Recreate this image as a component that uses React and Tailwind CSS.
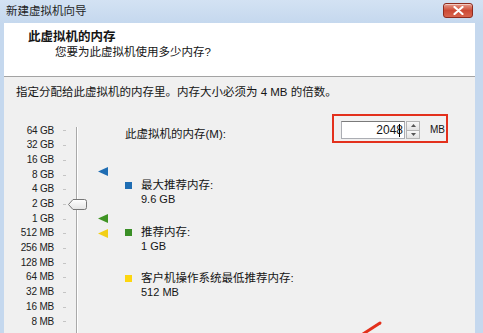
const CJK = "font-['Liberation_Sans','Noto_Sans_CJK_SC',sans-serif]";

function CloseBtn() {
  return (
    <div className="self-start mt-[3px] w-[30px] h-[15px] rounded-[3px] border border-[#8e2b1e] bg-gradient-to-b from-[#e59a8c] via-[#cc4a35] to-[#d8644d] flex items-center justify-center shadow-[inset_0_1px_0_rgba(255,255,255,0.5)]">
      <svg width="11" height="9" viewBox="0 0 11 9">
        <path d="M1.5 1 L9.5 8 M9.5 1 L1.5 8" stroke="#ffffff" strokeWidth="2.2" strokeLinecap="round" />
      </svg>
    </div>
  );
}

function Tri({ color, top }) {
  return (
    <svg className="absolute left-0" style={{ top }} width="10" height="9" viewBox="0 0 10 9">
      <polygon points="0,4.5 10,0 10,9" fill={color} />
    </svg>
  );
}

function Legend({ color, title, value, className }) {
  return (
    <div className={"flex items-start " + className}>
      <div className={"w-[7px] h-[7px] mt-[3px] shrink-0 " + color} />
      <div className="ml-[9px] flex flex-col">
        <span className="text-[11.5px] leading-[13.5px]">{title}</span>
        <span className="text-[11px] leading-[13.5px]">{value}</span>
      </div>
    </div>
  );
}

export default function App() {
  const labels = ["64 GB", "32 GB", "16 GB", "8 GB", "4 GB", "2 GB", "1 GB", "512 MB", "256 MB", "128 MB", "64 MB", "32 MB", "16 MB", "8 MB"];
  return (
    <div className={"w-[483px] h-[333px] overflow-hidden bg-[#c5d8ee] flex flex-col relative text-[#151515] " + CJK}>
      <div className="h-[23px] shrink-0 flex items-center justify-between pl-[6px] pr-[10px] bg-gradient-to-b from-[#d3e2f3] to-[#c5d8ee]">
        <span className="text-[11.5px] leading-none text-[#1e1e1e]">新建虚拟机向导</span>
        <CloseBtn />
      </div>
      <div className="flex-1 ml-[4px] mr-[8px] flex flex-col min-h-0">
        <div className="h-[54px] shrink-0 bg-white border-b border-[#a3a3a3] pl-[24px] pt-[6.5px] flex flex-col">
          <span className="text-[12.5px] leading-[15px] font-bold">此虚拟机的内存</span>
          <span className="text-[11.5px] leading-[15px] ml-[27px]">您要为此虚拟机使用多少内存?</span>
        </div>
        <div className="flex-1 bg-[#f0f0f0] flex flex-col min-h-0">
          <div className="pt-[8px] pl-[12px] text-[11.5px] leading-[14px]">指定分配给此虚拟机的内存里。内存大小必须为 4 MB 的倍数。</div>
          <div className="flex-1 flex min-h-0">
            <div className="w-[50px] pt-[24.6px] flex flex-col items-end text-[10px] leading-[14.7px] tracking-[-0.2px] text-[#202020]">
              {labels.map((l) => (
                <div key={l} className="h-[14.7px]">{l}</div>
              ))}
            </div>
            <div className="ml-[9px] w-[4px] pt-[24.6px] flex flex-col">
              {labels.map((l) => (
                <div key={l} className="h-[14.7px] flex items-center">
                  <div className="w-[3px] h-px bg-[#c4c4c4]" />
                </div>
              ))}
            </div>
            <div className="ml-[9px] relative pt-[28px] flex">
              <div className="w-px bg-[#a9a9a9]" />
              <div className="w-px bg-white" />
              <svg className="absolute left-[-8px] top-[100px]" width="19" height="11" viewBox="0 0 19 11">
                <defs>
                  <linearGradient id="th" x1="0" y1="0" x2="0" y2="1">
                    <stop offset="0" stopColor="#ffffff" />
                    <stop offset="1" stopColor="#e4e4e4" />
                  </linearGradient>
                </defs>
                <path d="M0.5 5.5 L5 0.5 L16.5 0.5 Q18.5 0.5 18.5 2.5 L18.5 8.5 Q18.5 10.5 16.5 10.5 L5 10.5 Z" fill="url(#th)" stroke="#777777" strokeWidth="1" />
              </svg>
            </div>
            <div className="ml-[20px] w-[10px] relative">
              <Tri color="#1f6db3" top={68} />
              <Tri color="#3f9423" top={115} />
              <Tri color="#f2cf16" top={130} />
            </div>
            <div className="ml-[17px] flex-1 flex flex-col">
              <div className="mt-[15px] flex items-start">
                <span className="mt-[13px] text-[11.5px] leading-[14px]">此虚拟机的内存(M):</span>
                <div className="ml-auto mr-[27px] w-[116px] h-[29px] border-2 border-[#e3301c] flex items-start pt-[5px] pl-[7px]">
                  <div className="w-[64px] h-[18px] bg-white border border-[#abadb3] border-t-[#7a7a7a] flex items-center justify-end pr-[1px] text-[12px] leading-none">
                    <span>2048</span>
                    <div className="w-px h-[13px] bg-black -ml-[4px]" />
                    <div className="w-[3px]" />
                  </div>
                  <div className="w-[14px] h-[18px] ml-px flex flex-col">
                    <div className="flex-1 border border-[#b5b5b5] bg-gradient-to-b from-[#f8f8f8] to-[#e3e3e3] flex items-center justify-center">
                      <svg width="5" height="3" viewBox="0 0 5 3"><polygon points="2.5,0 5,3 0,3" fill="#555" /></svg>
                    </div>
                    <div className="flex-1 border border-t-0 border-[#b5b5b5] bg-gradient-to-b from-[#f8f8f8] to-[#e3e3e3] flex items-center justify-center">
                      <svg width="5" height="3" viewBox="0 0 5 3"><polygon points="0,0 5,0 2.5,3" fill="#555" /></svg>
                    </div>
                  </div>
                  <span className="ml-[10px] mt-[2px] text-[10px] leading-[14px]">MB</span>
                </div>
              </div>
              <Legend className="mt-[36px]" color="bg-[#1f6db3]" title="最大推荐内存:" value="9.6 GB" />
              <Legend className="mt-[20px]" color="bg-[#3a8f26]" title="推荐内存:" value="1 GB" />
              <Legend className="mt-[19px]" color="bg-[#fdd60f]" title="客户机操作系统最低推荐内存:" value="512 MB" />
            </div>
          </div>
        </div>
      </div>
      <svg className="absolute left-[360px] top-[320px]" width="24" height="14" viewBox="0 0 24 14">
        <path d="M20 3 L3 14" stroke="#e3301c" strokeWidth="3" strokeLinecap="round" />
      </svg>
    </div>
  );
}
